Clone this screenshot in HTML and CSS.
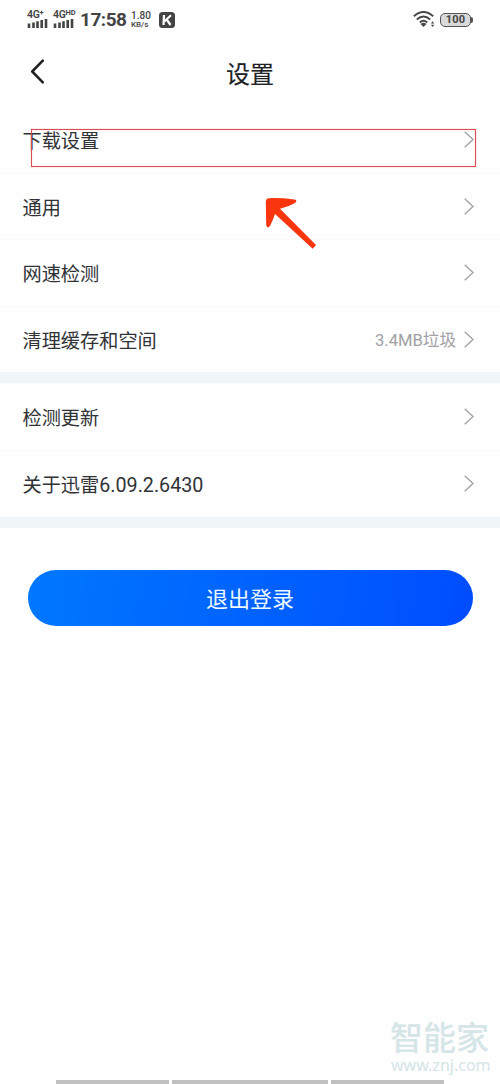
FILE: index.html
```html
<!DOCTYPE html>
<html lang="zh-CN">
<head>
<meta charset="utf-8">
<title>设置</title>
<link rel="stylesheet" href="styles.css">
</head>
<body>
<div class="screen">
  <div class="status">
    <div class="sim"><span class="net">4G<sup>+</sup></span><svg width="21" height="9" viewBox="0 0 21 9"><path d="M2 4.500v4.500M6.500 3.500v5.500M10.500 2.200v6.800M14.700 1v8M19 0v9" stroke="#444" stroke-width="2.600"/></svg></div>
    <div class="sim"><span class="net">4G<sup>HD</sup></span><svg width="21" height="9" viewBox="0 0 21 9"><path d="M2 4.500v4.500M6.500 3.500v5.500M10.500 2.200v6.800M14.700 1v8M19 0v9" stroke="#444" stroke-width="2.600"/></svg></div>
    <span class="time">17:58</span>
    <div class="speed"><span class="rate">1.80</span><span class="unit">KB/s</span></div>
    <svg class="kapp" width="16" height="16" viewBox="0 0 16 16"><rect width="16" height="16" rx="3.500" fill="#444"/><path d="M5 3L4.500 13M12 3.200L5.300 9.500M7.700 7.500L11.500 13" stroke="#fff" stroke-width="2.200" fill="none"/></svg>
    <svg class="wifi" width="22" height="17" viewBox="0 0 22 17"><g fill="none" stroke="#484848" stroke-width="1.900"><path d="M.8 5.300Q10.500-3.400 20.200 5.300"/><path d="M3.800 8.500Q10.500 2.500 17.200 8.500"/><path d="M6.800 11.500Q10.500 8.200 14.200 11.500"/></g><path d="M7.500 13Q10.500 10.600 13.500 13L10.500 15.900Z" fill="#484848"/><path d="M17.900 12.500l1.700-2.200 1.700 2.200zM17.900 13.700l1.700 2.200 1.700-2.200z" fill="#484848"/></svg>
    <div class="battery">100</div><i class="cap"></i>
  </div>
  <header class="nav">
    <svg class="back" width="15" height="25" viewBox="0 0 15 25"><path d="M12.800 1.700L2.200 12.500L12.800 23.300" fill="none" stroke="#1e2022" stroke-width="2.500" stroke-linecap="round" stroke-linejoin="round"/></svg>
    <h1 class="title">设置</h1>
  </header>
  <main>
    <section class="group">
      <div class="row"><span class="label">下载设置</span><svg class="chev" viewBox="0 0 10 17"><path d="M.7.7L9 8.500L.7 16.300"/></svg></div>
      <div class="row"><span class="label">通用</span><svg class="chev" viewBox="0 0 10 17"><path d="M.7.7L9 8.500L.7 16.300"/></svg></div>
      <div class="row"><span class="label">网速检测</span><svg class="chev" viewBox="0 0 10 17"><path d="M.7.7L9 8.500L.7 16.300"/></svg></div>
      <div class="row"><span class="label">清理缓存和空间</span><span class="value">3.4MB垃圾</span><svg class="chev" viewBox="0 0 10 17"><path d="M.7.7L9 8.500L.7 16.300"/></svg></div>
    </section>
    <section class="group">
      <div class="row"><span class="label">检测更新</span><svg class="chev" viewBox="0 0 10 17"><path d="M.7.7L9 8.500L.7 16.300"/></svg></div>
      <div class="row"><span class="label">关于迅雷<span class="version">6.09.2.6430</span></span><svg class="chev" viewBox="0 0 10 17"><path d="M.7.7L9 8.500L.7 16.300"/></svg></div>
    </section>
    <button class="logout">退出登录</button>
  </main>
  <footer class="tabs"><i class="side"></i><i class="mid"></i><i class="side"></i></footer>
  <div class="marker"></div>
  <svg class="arrow" width="52" height="52" viewBox="0 0 52 52"><path d="M4 1.200Q.8 1.300.8 5L1.200 28Q2.500 32.500 5.200 28.500Q8.500 22 10 17L47.700 51.800L51 48L15 11.800Q23 10 30 6Q33 3 29.500 2.500Q16 .8 4 1.200Z" fill="#f8350c"/></svg>
  <div class="watermark"><div class="brand">智能家</div><div class="site">www.znj.com</div></div>
</div>
</body>
</html>
```
FILE: styles.css
```css
* { box-sizing: border-box; }
body { margin: 0; background: #fefefe; font-family: Roboto, "Noto Sans CJK SC", sans-serif; color: #303236; }
.screen { position: relative; width: 500px; height: 1084px; overflow: hidden; display: flex; flex-direction: column; }
svg { display: block; flex: none; }

.status { height: 40px; display: flex; align-items: center; padding: 0 27px; color: #444; font-weight: 700; }
.sim { width: 26px; height: 18px; display: flex; flex-direction: column; justify-content: space-between; margin-top: -3px; }
.net { font-size: 10.5px; line-height: 9px; height: 9px; white-space: nowrap; letter-spacing: -.3px; font-weight: 600; }
.net sup { font-size: 7.5px; font-weight: 700; line-height: 0; vertical-align: 3px; letter-spacing: 0; }
.time { width: 46px; margin: 0 0 0 1px; font-size: 19px; line-height: 22px; letter-spacing: -.5px; white-space: nowrap; }
.speed { margin: -1px 0 0 5px; width: 21px; display: flex; flex-direction: column; white-space: nowrap; }
.rate { font-size: 10px; line-height: 10px; font-weight: 500; }
.unit { font-size: 8px; line-height: 8px; font-weight: 500; }
.kapp { margin-left: 7px; }
.wifi { margin: -1px 0 0 auto; }
.battery { margin: -1px 0 0 5px; width: 31px; height: 14px; border: 1.5px solid #555; border-radius: 5px; background: #d9d9d9; text-align: center; font-size: 11px; line-height: 12px; letter-spacing: .2px; }
.cap { width: 2px; height: 6px; border-radius: 0 2px 2px 0; background: #555; }

.nav { height: 66px; display: grid; grid-template-columns: 60px 1fr 60px; align-items: start; }
.back { margin: 19px 0 0 30px; }
.title { margin: 17px 0 0; text-align: center; font-size: 24px; line-height: 36px; font-weight: 400; color: #202225; -webkit-text-stroke: .15px #202225; }

.group { padding-bottom: 11.5px; background: linear-gradient(#f0f5f8, #f0f5f8) bottom / 100% 11.5px no-repeat; }
.row { height: 66.5px; padding: 0 26px 0 23px; display: flex; align-items: center; font-size: 19.2px; line-height: 28px; }
.row + .row { border-top: 1px solid #fafafa; }
.label { padding-top: 5px; margin-left: -.5px; }
.version { font-size: 19.7px; }
.chev { width: 10px; height: 17px; margin-left: auto; fill: none; stroke: #a1a4a9; stroke-width: 1.4; }
.value { margin-left: auto; padding-top: 3px; color: #a0a1a4; font-size: 16.6px; }
.value + .chev { margin-left: 8px; }
.logout { display: block; width: 445px; height: 56px; margin: 41.5px 0 0 27.5px; padding: 4px 0 0; border: 0; border-radius: 28px; background: linear-gradient(100deg, #0078ff, #004dff); color: #edf8ff; font: 22px/52px Roboto, "Noto Sans CJK SC", sans-serif; }

.tabs { margin-top: auto; height: 4px; padding: 0 56px; display: flex; gap: 3px; }
.tabs i { height: 4px; background: #c0c0c0; }
.side { width: 113px; }
.mid { width: 156px; }

.marker { position: absolute; left: 31px; top: 129px; width: 445px; height: 38px; border: 1px solid #da4d51; box-shadow: 0 0 1px rgba(218, 77, 81, .5), inset 0 0 1px rgba(218, 77, 81, .5); }
.arrow { position: absolute; left: 265px; top: 197px; }
.watermark { position: absolute; left: 390px; top: 1016px; width: 104px; color: #d5e5e8; white-space: nowrap; }
.brand { font: 500 33px/40px "Noto Sans CJK SC", sans-serif; }
.site { font: 16px/18px "Noto Sans", sans-serif; margin-left: 1px; }
```
